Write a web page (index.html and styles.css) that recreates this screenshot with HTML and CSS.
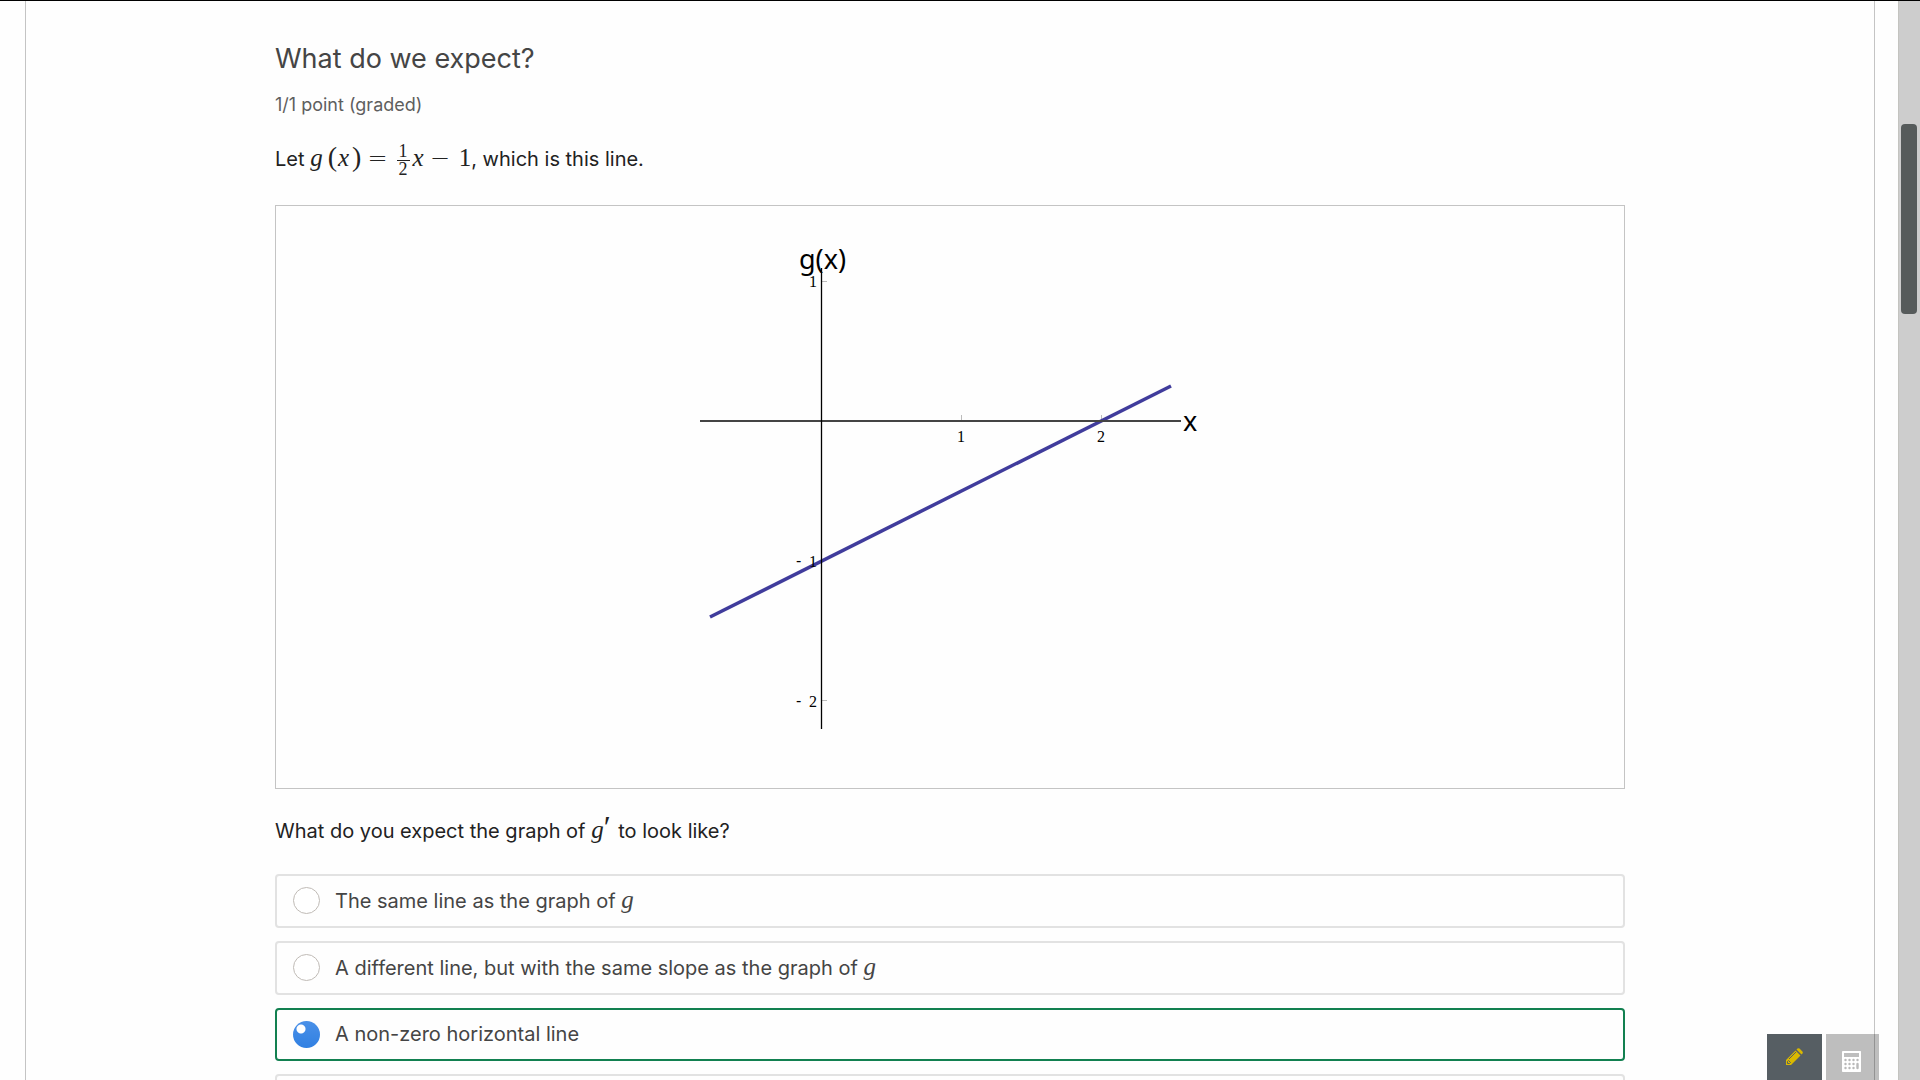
FILE: index.html
```html
<!DOCTYPE html>
<html lang="en">
<head>
<meta charset="utf-8">
<title>What do we expect?</title>
<link rel="stylesheet" href="styles.css">
</head>
<body>
<div class="shell">
  <main class="page">
    <form class="problem">
      <h1 class="title">What do we expect?</h1>
      <p class="progress">1/1 point (graded)</p>
      <p class="prompt">Let <span class="math"><i>g</i><span class="paren">(</span><i>x</i><span class="paren close">)</span><span class="rel">=</span><span class="frac"><span class="num">1</span><span class="den">2</span></span><i>x</i><span class="rel">−</span>1</span>, which is this line.</p>
      <figure class="figure">
        <svg class="plot" viewBox="0 0 540 582" role="img" aria-label="Graph of g(x)">
          <path class="tick" d="M281.5 209v6M421.5 209v6M142 75.500h5M142 494.500h5"/>
          <path class="curve" d="M30 411L491 180"/>
          <path class="axis-x" d="M20 215H501"/>
          <path class="axis-y" d="M141.500 62V523"/>
          <text class="name" x="119" y="63">g(x)</text>
          <text class="name" x="503" y="225">x</text>
          <g class="value">
            <text x="129" y="81">1</text>
            <text x="277" y="236">1</text>
            <text x="417" y="236">2</text>
            <text x="129" y="361">1</text>
            <text x="129" y="501">2</text>
          </g>
          <g class="minus">
            <text x="116" y="360">-</text>
            <text x="116" y="500">-</text>
          </g>
        </svg>
      </figure>
      <p class="question" id="q">What do you expect the graph of <span class="math"><i>g</i><span class="prime">′</span></span> to look like?</p>
      <div class="options" role="radiogroup" aria-labelledby="q">
        <label class="option"><input class="radio" type="radio" name="answer"><span>The same line as the graph of <i class="math">g</i></span></label>
        <label class="option"><input class="radio" type="radio" name="answer"><span>A different line, but with the same slope as the graph of <i class="math">g</i></span></label>
        <label class="option correct"><input class="radio" type="radio" name="answer" checked><span>A non-zero horizontal line</span></label>
        <label class="option"><input class="radio" type="radio" name="answer" aria-label="Fourth choice"></label>
      </div>
    </form>
  </main>
  <div class="scrollbar"><div class="thumb"></div></div>
  <div class="tools">
    <button class="tool notes" type="button" aria-label="Notes">
      <svg width="18" height="18" viewBox="0 0 18 18"><path fill="#d9b800" d="M1 12L10.500 2.500L15.500 7.500L6 17H1zM11.500 1.500L12.500.5Q13.500-.2 14.500.6L17.400 3.500Q18.200 4.500 17.500 5.500L16.500 6.500z"/><path d="M4 11L11 4M2.500 13.500V15.500H4.500L5.500 14.500L3.500 12.500z" fill="none" stroke="#565e63"/></svg>
    </button>
    <button class="tool calc" type="button" aria-label="Calculator">
      <svg width="19" height="21" viewBox="0 0 19 21"><rect x=".5" y=".5" width="18" height="20" rx="1" fill="none" stroke="#fff" stroke-width="1.400"/><path fill="#fff" fill-rule="evenodd" d="M1 1h17v19H1zM2 2v4h15V2z"/><path stroke="#b9b9b9" stroke-width="2.400" stroke-linecap="round" d="M3.500 9h.01M7.500 9h.01M11.500 9h.01M15.500 9h.01M3.500 13h.01M7.500 13h.01M11.500 13h.01M15.500 13v4M3.500 17h.01M7.500 17h.01M11.500 17h.01"/></svg>
    </button>
  </div>
</div>
</body>
</html>
```
FILE: styles.css
```css
* { box-sizing: border-box; }
body { margin: 0; background: #fefefe; font-family: Inter, "Liberation Sans", sans-serif; color: #222; }
.shell { position: relative; display: flex; height: 100vh; overflow: hidden; border-top: 1px solid #000; }
.page { flex: 1; min-width: 0; margin: 0 23px 0 25px; border: solid #c4c4c4; border-width: 0 1px; height: max-content; min-height: 100%; }
.problem { max-width: 1350px; margin: 0 auto; padding-top: 40px; }
.title { margin: 0; font-size: 27px; line-height: 36px; font-weight: 400; color: #454545; }
.progress { margin: 16px 0 0; font-size: 18px; line-height: 24px; color: #5e5e5e; }
.prompt { height: 52px; margin: 16px 0 0; font-size: 20px; line-height: 52px; }
.math { font-family: "Liberation Serif", serif; font-size: 25px; line-height: 24px; }
.paren { font-size: 28px; margin: 0 1px 0 5px; }
.close { margin: 0 0 0 3px; }
.rel { margin: 0 9px 0 6px; font-family: "DejaVu Sans", sans-serif; font-weight: 200; font-size: 24px; }
.frac { display: inline-flex; flex-direction: column; vertical-align: middle; text-align: center; margin-right: 3px; font-size: 18px; line-height: 17px; }
.num { border-bottom: 1px solid #222; padding: 0 2px; }
.prime { margin-right: 2px; font-size: 32px; }
.figure { margin: 20px 0 0; border: 1px solid #c4c4c4; display: flex; justify-content: center; }
.plot { display: block; width: 540px; height: 582px; }
.axis-x { stroke: #444; stroke-width: 2; }
.axis-y { stroke: #000; stroke-width: 1.3; }
.tick { stroke: #bbb; }
.curve { stroke: #403c9c; stroke-width: 3.5; }
.name { font: 27px "Noto Sans", sans-serif; fill: #000; }
.value { font: 16px "Liberation Serif", serif; fill: #000; }
.minus { font: 16px "Liberation Sans", sans-serif; fill: #000; }
.question { height: 40px; margin: 22px 0 0; font-size: 20px; line-height: 40px; }
.options { display: flex; flex-direction: column; gap: 13px; margin-top: 23px; }
.option { display: flex; align-items: center; gap: 15px; min-height: 54px; padding: 0 16px 1px; border: 2px solid #e2e2e2; border-radius: 4px; font-size: 20px; line-height: 28px; color: #454545; }
.correct { min-height: 53px; border-color: #128050; }
.radio { appearance: none; flex: none; width: 27px; height: 27px; margin: 0; border: 1px solid #c0bbb6; border-radius: 50%; background: #fff; }
.radio:checked { border: 0; background: radial-gradient(circle at 8px 8px, #fff 4px, transparent 5px), linear-gradient(#4a90e8, #3080e2); }
.scrollbar { flex: none; width: 22px; background: #cdcdcd; border-left: 1px solid #c4c4c0; padding: 123px 3px 0 2px; }
.thumb { height: 190px; border-radius: 4px; background: #565b5b; }
.tools { position: absolute; right: 41px; bottom: 0; display: flex; gap: 4px; }
.tool { display: flex; justify-content: center; width: 55px; height: 46px; border: 0; padding: 14px 2px 0 0; background: #565e63; }
.calc { width: 53px; padding-top: 17px; background: rgba(0, 0, 0, .25); }
```
